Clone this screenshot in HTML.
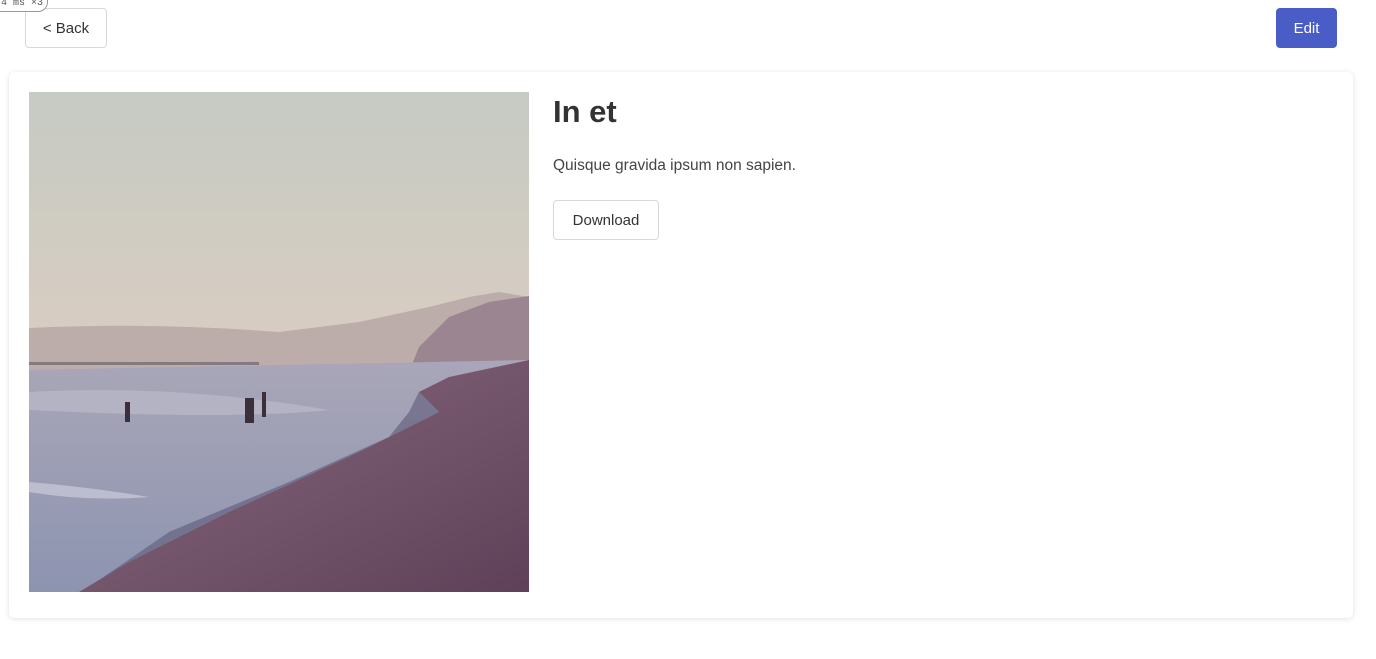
<!DOCTYPE html>
<html><head><meta charset="utf-8"><style>
body{margin:0;background:#fff;font-family:"Liberation Sans",sans-serif;color:#333;width:1376px;height:659px;overflow:hidden;position:relative}
.btn{position:absolute;box-sizing:border-box;border:1px solid #d8d8d8;border-radius:4px;background:#fff;font-size:15px;color:#333;display:flex;align-items:center;justify-content:center}
.tag{position:absolute;left:-6px;top:-8px;width:54px;height:20px;border:1px solid #999;border-radius:0 0 10px 0;background:#fff;font:10px "Liberation Mono",monospace;color:#555;box-sizing:border-box;padding:6px 0 0 6px;line-height:10px}
.card{position:absolute;left:9px;top:72px;width:1344px;height:546px;background:#fff;border-radius:5px;box-shadow:0 1px 6px rgba(0,0,0,.12)}
</style></head><body>
<div class="btn" style="left:25px;top:8px;width:82px;height:40px">&lt; Back</div>
<div class="tag">4 ms ×3</div>
<div class="btn" style="left:1276px;top:8px;width:61px;height:40px;background:#4a5cc6;border-color:#4a5cc6;color:#fff">Edit</div>
<div class="card"></div>
<svg style="position:absolute;left:29px;top:92px" width="500" height="500" viewBox="0 0 500 500">
<defs>
<linearGradient id="sky" x1="0" y1="0" x2="0" y2="1"><stop offset="0" stop-color="#c6cbc3"/><stop offset=".5" stop-color="#d8ccc2"/><stop offset=".7" stop-color="#d9c9c4"/></linearGradient>
<linearGradient id="sea" x1="0" y1="0" x2="0" y2="1"><stop offset="0" stop-color="#a9a6b8"/><stop offset="1" stop-color="#8d94b0"/></linearGradient>
<linearGradient id="sand" x1="0" y1="0" x2="1" y2="1"><stop offset="0" stop-color="#8a6a80"/><stop offset="1" stop-color="#5e4158"/></linearGradient>
</defs>
<rect width="500" height="500" fill="url(#sky)"/>
<path d="M0 236 Q120 230 250 240 L330 230 L400 215 L440 205 L470 200 L500 205 L500 280 L0 280Z" fill="#bcadab"/>
<path d="M390 255 L420 225 L460 210 L500 204 L500 280 L380 280Z" fill="#9a8590"/>
<rect x="0" y="270" width="230" height="3" fill="#857a80"/>
<path d="M0 278 L500 268 L500 500 L0 500Z" fill="url(#sea)"/>
<path d="M500 268 L420 285 L390 300 L410 320 L330 360 L200 420 L100 470 L50 500 L500 500Z" fill="url(#sand)"/>
<path d="M390 300 L410 320 L330 360 L200 420 L100 470 L60 495 L140 440 L260 390 L360 345 L380 320Z" fill="#5d5878" opacity=".6"/>
<path d="M0 300 Q150 292 300 318 Q200 328 0 318Z" fill="#c6c3cf" opacity=".5"/>
<path d="M0 390 Q60 395 120 405 Q60 410 0 400Z" fill="#d4d4e0" opacity=".6"/>
<rect x="96" y="310" width="5" height="20" fill="#3a2f3a"/>
<rect x="216" y="306" width="9" height="25" fill="#3a2f3a"/>
<rect x="233" y="300" width="4" height="25" fill="#3a2f3a"/>
</svg>
<div style="position:absolute;left:553px;top:94px;font-size:31px;font-weight:bold;color:#333">In et</div>
<div style="position:absolute;left:553px;top:157px;font-size:15.5px;color:#444">Quisque gravida ipsum non sapien.</div>
<div class="btn" style="left:553px;top:200px;width:106px;height:40px">Download</div>
</body></html>
